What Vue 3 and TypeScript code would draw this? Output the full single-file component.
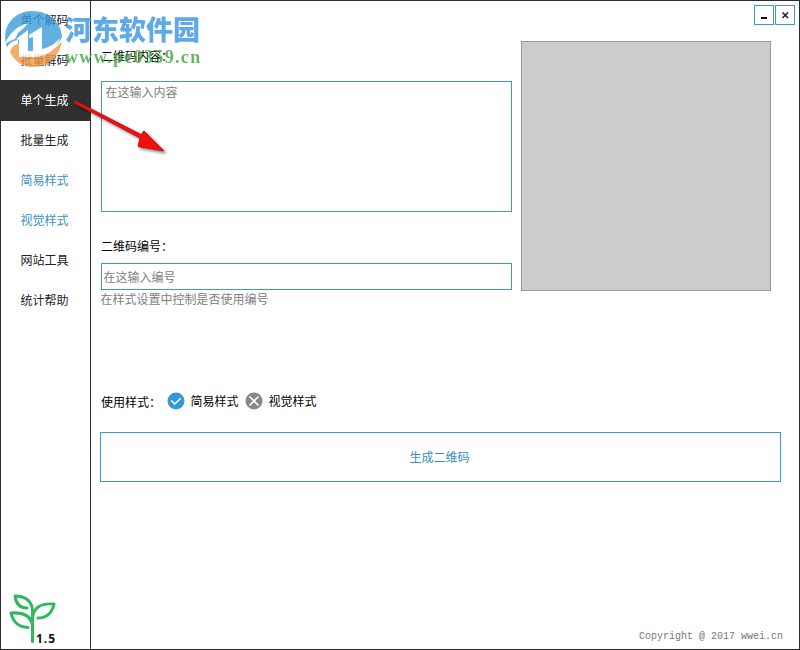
<script setup lang="ts">
import { ref } from 'vue'

interface NavItem {
  label: string
  accent?: boolean
}

const navItems: NavItem[] = [
  { label: '单个解码' },
  { label: '批量解码' },
  { label: '单个生成' },
  { label: '批量生成' },
  { label: '简易样式', accent: true },
  { label: '视觉样式', accent: true },
  { label: '网站工具' },
  { label: '统计帮助' },
]

const active = ref(2)
const content = ref('')
const code = ref('')
const selectedStyle = ref<'simple' | 'visual'>('simple')
</script>

<template>
  <div class="window">
    <aside class="sidebar">
      <nav>
        <div
          v-for="(item, i) in navItems"
          :key="item.label"
          class="nav-item"
          :class="{ active: i === active, accent: item.accent }"
          @click="active = i"
        >{{ item.label }}</div>
      </nav>
      <div class="brand">
        <svg class="plant" width="48" height="52" viewBox="0 0 48 52" fill="none" stroke="#2fb95d" stroke-width="3" stroke-linecap="round" stroke-linejoin="round">
          <path d="M23.500 47.500V17C23.500 8 17 2 6 2C7 10 11 14 18 14" />
          <path d="M23.500 25C24 14 31 9 45 10C43 19 38 24 29 24" />
          <path d="M23.500 31C22 23 16 18 2 19C4 28 9 33 19 33.500" />
        </svg>
        <span class="version">1.5</span>
      </div>
    </aside>

    <main class="main">
      <header class="titlebar">
        <button class="win-btn" aria-label="minimize">
          <svg width="18" height="18" viewBox="0 0 18 18"><path d="M6 12H12" stroke="#111" stroke-width="2" /></svg>
        </button>
        <button class="win-btn" aria-label="close">
          <svg width="18" height="18" viewBox="0 0 18 18"><path d="M6.500 6.500L12 12M12 6.500L6.500 12" stroke="#222" stroke-width="1.600" /></svg>
        </button>
      </header>

      <section class="form">
        <div class="fields">
          <label class="label first">二维码内容：</label>
          <div class="field area">
            <textarea v-model="content" class="control" placeholder="在这输入内容"></textarea>
          </div>
          <label class="label second">二维码编号：</label>
          <div class="field line">
            <input v-model="code" class="control" placeholder="在这输入编号" />
          </div>
          <p class="hint">在样式设置中控制是否使用编号</p>
        </div>
        <div class="preview"></div>
      </section>

      <section class="styles">
        <span class="styles-label">使用样式：</span>
        <div v-for="opt in (['simple', 'visual'] as const)" :key="opt" class="option" @click="selectedStyle = opt">
          <svg width="18" height="18" viewBox="0 0 18 18" fill="none" stroke="#fff" stroke-width="1.600">
            <circle cx="9" cy="9" r="8.500" :fill="selectedStyle === opt ? '#3597d9' : '#878787'" stroke="none" />
            <path v-if="selectedStyle === opt" d="M4.300 8.700L7.800 12L13.700 6.200" />
            <path v-else d="M4.500 4.500L13.500 13.500M13.500 4.500L4.500 13.500" />
          </svg>
          <span>{{ opt === 'simple' ? '简易样式' : '视觉样式' }}</span>
        </div>
      </section>

      <button class="generate">生成二维码</button>
      <footer class="copyright">Copyright @ 2017 wwei.cn</footer>
    </main>

    <div class="watermark">
      <svg class="mark" width="64" height="66" viewBox="0 0 64 66">
        <path d="M6 47C-1 26 13 10 31 10C48 10 60 21 61 36C58 43 52 49 45 50H17V39C11 40 7 43 6 47Z" fill="#3c9ddc" />
        <path d="M9 51C11 45 14 43 18 43V53H38C48 52 56 47 61 40C59 55 47 66 32 66C22 66 13 60 9 51Z" fill="#f19a48" />
        <path d="M4 43C8 33 15 25 28 22L17 32L14 38C10 39 7 41 4 43Z" fill="#fff" />
        <path d="M15 38L27 29V50H32V36L28 37V34L41 26V48C49 46 55 42 59 37C55 49 46 55 34 56H18V39Z" fill="#fff" />
      </svg>
      <span class="site-name">河东软件园</span>
      <span class="site-url">www.pc0359.cn</span>
    </div>

    <svg class="arrow" width="104" height="66" viewBox="0 0 104 66">
      <path d="M5.500 5L71 38.500L74 35L94 55L68 50.500L70 42L4.500 7Z" fill="#f01010" stroke="#c81414" stroke-width="1" stroke-linejoin="round" />
    </svg>
  </div>
</template>

<style>
body {
  margin: 0;
}
</style>

<style scoped>
.window {
  position: relative;
  display: flex;
  box-sizing: border-box;
  width: 800px;
  height: 650px;
  border: 1px solid #2d2d2d;
  background: #fff;
  color: #000;
  font: 12px/16px 'Noto Sans CJK SC', sans-serif;
  overflow: hidden;
}
.sidebar {
  display: flex;
  flex-direction: column;
  justify-content: space-between;
  box-sizing: border-box;
  width: 90px;
  border-right: 1px solid #2d2d2d;
}
nav {
  display: flex;
  flex-direction: column;
}
.nav-item {
  box-sizing: border-box;
  height: 40px;
  padding-left: 19.5px;
  line-height: 40px;
  color: #222;
}
.nav-item:first-child {
  height: 39px;
  line-height: 38px;
}
.nav-item.accent {
  color: #3594c6;
}
.nav-item.active {
  height: 41px;
  margin-bottom: -1px;
  background: #303030;
  color: #fff;
  line-height: 40px;
}
.brand {
  display: flex;
  align-items: flex-end;
  padding: 0 0 3px 8px;
}
.plant {
  display: block;
}
.version {
  margin-left: -21px;
  color: #111;
  font: bold 12px/15px 'Noto Sans', sans-serif;
  letter-spacing: 1px;
}
.main {
  flex: 1;
  display: flex;
  flex-direction: column;
  min-width: 0;
}
.titlebar {
  display: flex;
  justify-content: flex-end;
  gap: 1px;
  padding: 4px 4px 0 0;
}
.win-btn {
  display: block;
  box-sizing: border-box;
  width: 20px;
  height: 20px;
  padding: 0;
  border: 1px solid #3d99c6;
  background: #fff;
}
.win-btn svg {
  display: block;
}
.form {
  display: grid;
  grid-template-columns: 411px 250px;
  column-gap: 9px;
  height: 270px;
  padding: 16px 0 0 10px;
}
.fields {
  display: flex;
  flex-direction: column;
}
.label.first {
  margin-top: 7px;
}
.label.second {
  margin-top: 26px;
}
.field {
  display: flex;
  box-sizing: border-box;
  width: 411px;
  border: 1px solid #3d99c6;
  background: #fff;
}
.control {
  flex: 1;
  min-width: 0;
  margin: 0;
  padding: 0;
  border: 0;
  outline: none;
  background: transparent;
  font: inherit;
  resize: none;
}
.control::placeholder {
  color: #808080;
  opacity: 1;
}
.area {
  height: 131px;
  margin-top: 17px;
  padding: 2px 3.5px;
}
.line {
  height: 27px;
  margin-top: 9px;
  padding: 0 1.5px;
}
.hint {
  margin: 1px 0 0 -0.5px;
  color: #808080;
}
.preview {
  box-sizing: border-box;
  height: 250px;
  border: 1px solid #999;
  background: #ccc;
}
.styles {
  display: flex;
  align-items: center;
  height: 20px;
  margin-top: 80px;
  padding-left: 10px;
}
.styles-label {
  width: 66px;
  padding-top: 1px;
  white-space: nowrap;
}
.option {
  display: flex;
  align-items: center;
  gap: 5.5px;
  margin-right: 6.5px;
}
.generate {
  width: 681px;
  height: 50px;
  margin: 21px 0 0 9px;
  padding: 0 2px 0 0;
  border: 1px solid #3d99c6;
  background: #fff;
  color: #358fb9;
  font: inherit;
}
.copyright {
  margin: auto 16px 5px 0;
  color: #777;
  font: 10px/14px 'Liberation Mono', monospace;
  text-align: right;
}
.watermark {
  position: absolute;
  top: 0;
  left: 0;
  display: grid;
  grid-template-columns: 64px auto;
  grid-template-rows: 44px 22px;
  opacity: 0.8;
  pointer-events: none;
}
.mark {
  grid-row: 1 / 3;
}
.site-name {
  padding-top: 9px;
  color: #3695e4;
  font: 900 27px/38px 'Noto Sans CJK SC', sans-serif;
}
.site-url {
  padding-top: 1px;
  color: #42a642;
  font: bold 18px/22px 'Liberation Serif', serif;
  letter-spacing: 1.35px;
}
.arrow {
  position: absolute;
  top: 95px;
  left: 69px;
  filter: drop-shadow(2px 2px 1.5px rgba(0, 0, 0, 0.5));
  pointer-events: none;
}
</style>
